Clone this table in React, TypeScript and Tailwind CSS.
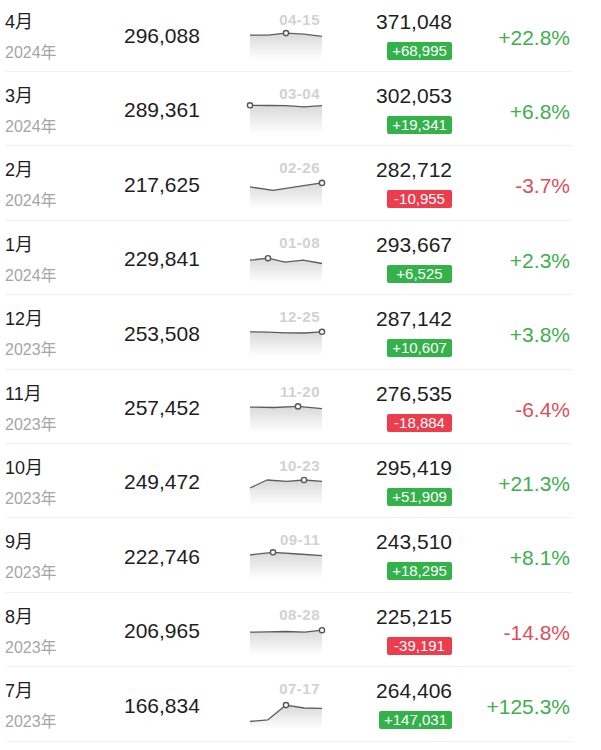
import React from "react";

type Row = {
  m: string;
  y: string;
  a: string;
  d: string;
  v: string;
  c: string;
  p: string;
  up: boolean;
  pts: [number, number][];
  dot: number;
};

const rows: Row[] = [
  { m: "4月", y: "2024年", a: "296,088", d: "04-15", v: "371,048", c: "+68,995", p: "+22.8%", up: true, pts: [[0, 11.1], [18, 11.1], [36, 9.1], [54, 10.2], [72, 12.4]], dot: 2 },
  { m: "3月", y: "2024年", a: "289,361", d: "03-04", v: "302,053", c: "+19,341", p: "+6.8%", up: true, pts: [[0, 7.3], [18, 7.5], [36, 7.6], [54, 8.8], [72, 7.6]], dot: 0 },
  { m: "2月", y: "2024年", a: "217,625", d: "02-26", v: "282,712", c: "-10,955", p: "-3.7%", up: false, pts: [[0, 14.9], [23, 18.3], [47, 14.6], [72, 10.9]], dot: 3 },
  { m: "1月", y: "2024年", a: "229,841", d: "01-08", v: "293,667", c: "+6,525", p: "+2.3%", up: true, pts: [[0, 13.2], [18, 11.2], [35, 15.2], [53, 13.2], [72, 16.5]], dot: 1 },
  { m: "12月", y: "2023年", a: "253,508", d: "12-25", v: "287,142", c: "+10,607", p: "+3.8%", up: true, pts: [[0, 10.8], [18, 11.2], [36, 11.8], [54, 12], [72, 10.8]], dot: 4 },
  { m: "11月", y: "2023年", a: "257,452", d: "11-20", v: "276,535", c: "-18,884", p: "-6.4%", up: false, pts: [[0, 11.1], [24, 11.5], [48, 10.4], [72, 12.7]], dot: 2 },
  { m: "10月", y: "2023年", a: "249,472", d: "10-23", v: "295,419", c: "+51,909", p: "+21.3%", up: true, pts: [[0, 18], [17, 10], [37, 11.3], [54, 10], [72, 11.3]], dot: 3 },
  { m: "9月", y: "2023年", a: "222,746", d: "09-11", v: "243,510", c: "+18,295", p: "+8.1%", up: true, pts: [[0, 10.9], [23, 8.3], [48, 10], [72, 11.6]], dot: 1 },
  { m: "8月", y: "2023年", a: "206,965", d: "08-28", v: "225,215", c: "-39,191", p: "-14.8%", up: false, pts: [[0, 13.2], [18, 12.8], [36, 12.5], [55, 13.2], [72, 11.2]], dot: 4 },
  { m: "7月", y: "2023年", a: "166,834", d: "07-17", v: "264,406", c: "+147,031", p: "+125.3%", up: true, pts: [[0, 28.5], [18, 26.8], [36, 12.1], [54, 15], [72, 15.4]], dot: 2 },
];

function Spark({ pts, dot, id }: { pts: [number, number][]; dot: number; id: string }) {
  const line = pts.map((p, i) => `${i === 0 ? "M" : "L"}${p[0]} ${p[1]}`).join(" ");
  const area = `${line} L72 36 L0 36 Z`;
  const minY = Math.min(...pts.map((p) => p[1]));
  const [cx, cy] = pts[dot];
  return (
    <svg width={73} height={38} viewBox="0 0 73 38" className="-mt-[3px] overflow-visible">
      <defs>
        <linearGradient id={id} x1="0" y1={minY} x2="0" y2="36" gradientUnits="userSpaceOnUse">
          <stop offset="0" stopColor="#d9d9d9" stopOpacity="1" />
          <stop offset="1" stopColor="#ffffff" stopOpacity="1" />
        </linearGradient>
      </defs>
      <path d={area} fill={`url(#${id})`} />
      <path d={line} fill="none" stroke="#5c5c5c" strokeWidth={1.3} strokeLinejoin="round" />
      <circle cx={cx} cy={cy} r={2.6} fill="#ffffff" stroke="#555555" strokeWidth={1.4} />
    </svg>
  );
}

export default function App() {
  return (
    <div className="bg-white w-[601px] h-[750px] overflow-hidden font-['Liberation_Sans','Noto_Sans_CJK_SC',sans-serif] text-[#1e1e1e]">
      <div className="ml-[5px] w-[567px] -mt-[2.4px]">
        {rows.map((r, i) => (
          <div key={i} className="flex h-[74.4px] border-b border-[#f1f1f1]">
            <div className="w-[119px] pt-[14px]">
              <div className="text-[18px] leading-[20px] text-[#1e1e1e]">{r.m}</div>
              <div className="mt-[11px] text-[16px] leading-[20px] text-[#a6a6a6]">{r.y}</div>
            </div>
            <div className="w-[126px] pt-[26.4px] text-[21px] leading-[24px]">{r.a}</div>
            <div className="w-[73px] flex flex-col pt-[14px]">
              <div className="text-right pr-[3px] text-[15px] leading-[15px] font-bold tracking-[0.5px] text-[#d2d2d2]">{r.d}</div>
              <Spark pts={r.pts} dot={r.dot} id={`g${i}`} />
            </div>
            <div className="w-[129px] flex flex-col items-end pt-[12.1px]">
              <div className="text-[21px] leading-[24px]">{r.v}</div>
              <div
                className={`mt-[7.9px] h-[18px] min-w-[65px] px-[5px] text-center text-[15px] leading-[18px] text-white rounded-[2px] ${
                  r.up ? "bg-[#33b24a]" : "bg-[#ec3d4f]"
                }`}
              >
                {r.c}
              </div>
            </div>
            <div
              className={`flex-1 text-right pr-[2px] pt-[28.1px] text-[21px] leading-[24px] ${
                r.up ? "text-[#3fae4f]" : "text-[#dd4f5a]"
              }`}
            >
              {r.p}
            </div>
          </div>
        ))}
      </div>
    </div>
  );
}
